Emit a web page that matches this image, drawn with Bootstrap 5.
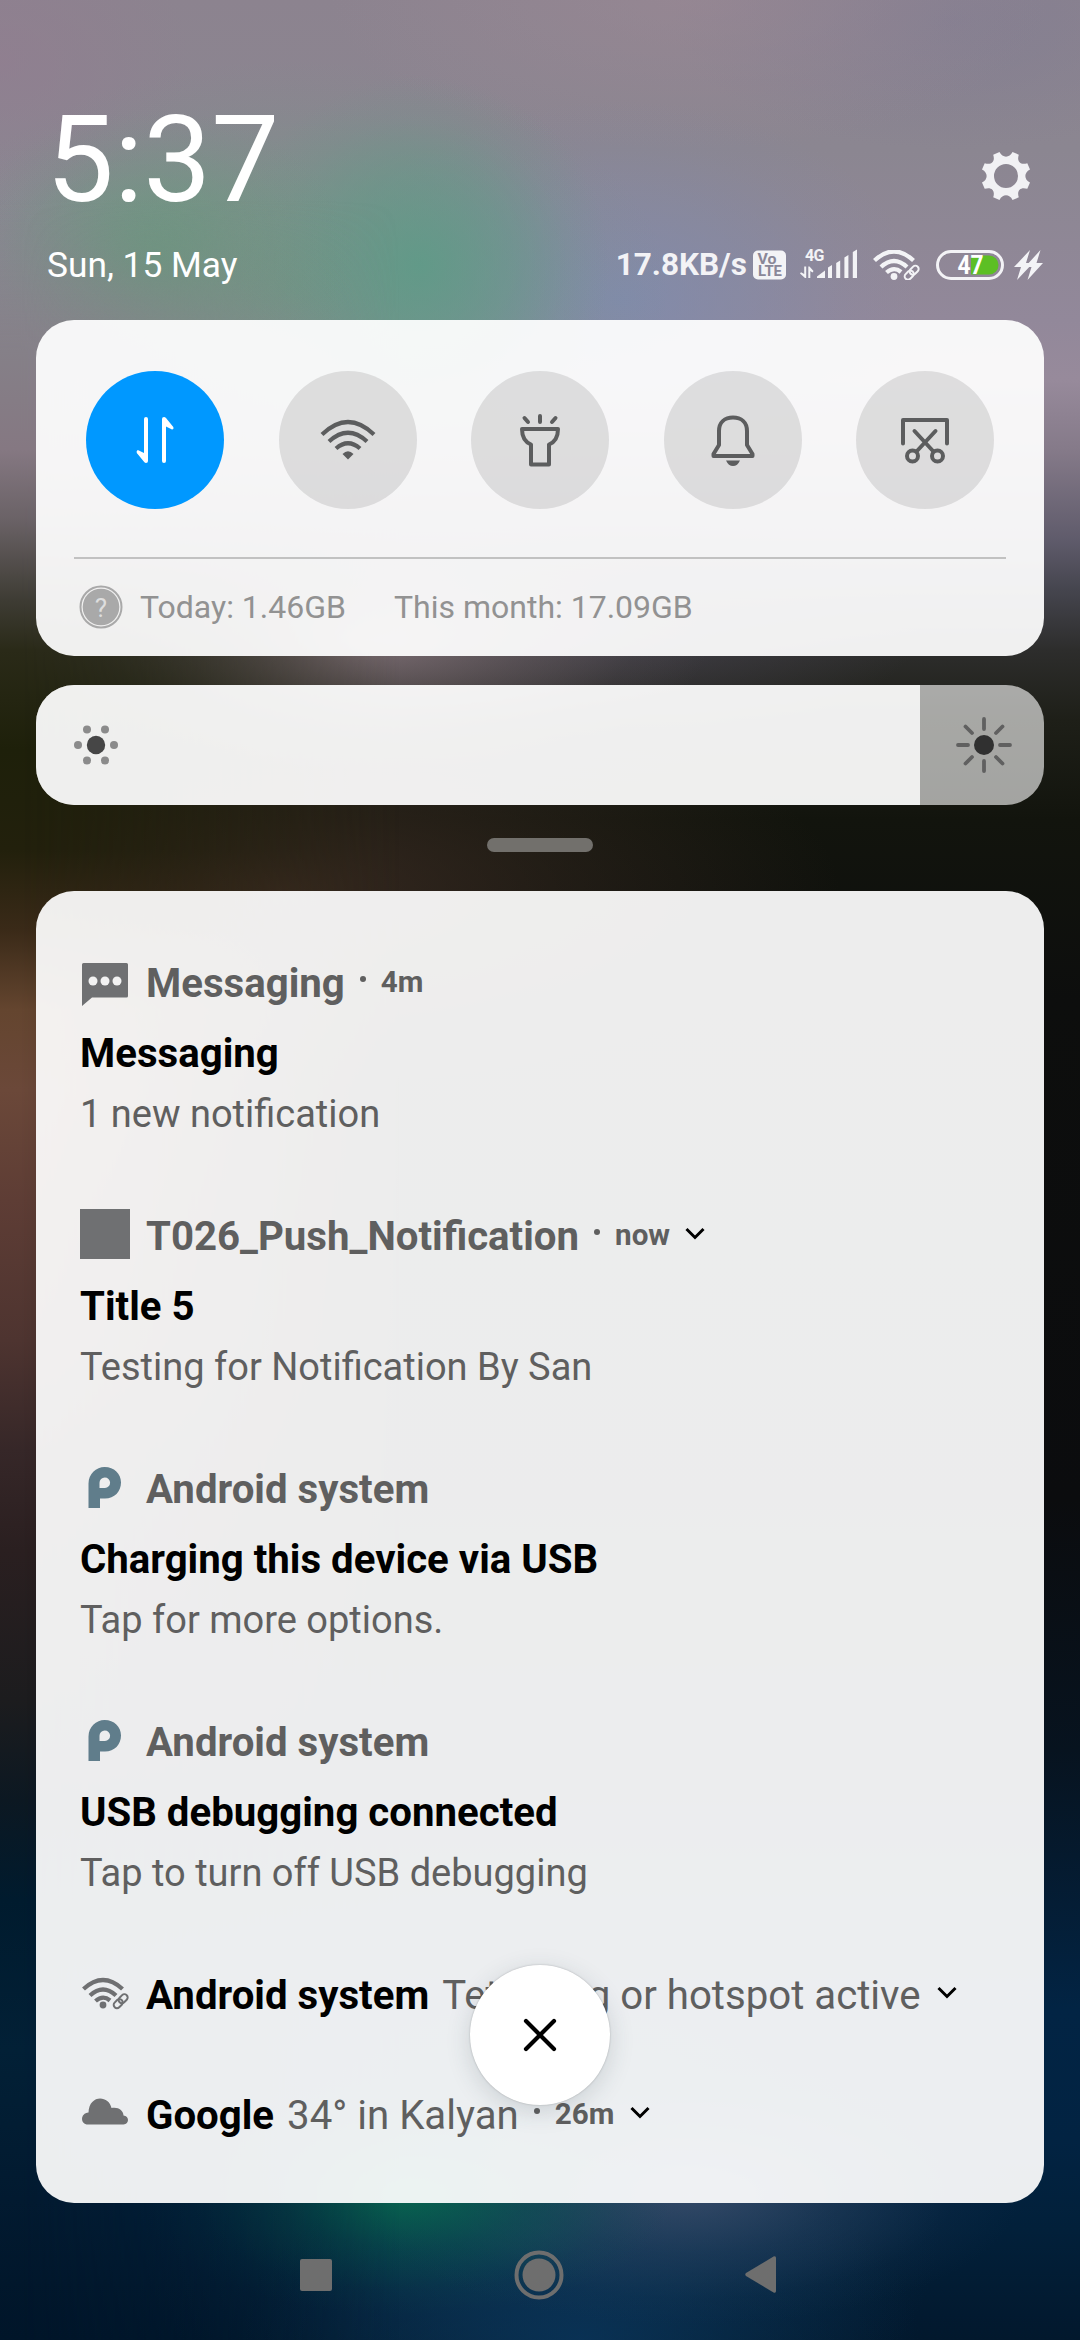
<!DOCTYPE html>
<html lang="en">
<head>
<meta charset="utf-8">
<meta name="viewport" content="width=device-width, initial-scale=1">
<title>Notification shade</title>
<link href="https://cdn.jsdelivr.net/npm/bootstrap@5.3.0/dist/css/bootstrap.min.css" rel="stylesheet">
<style>
  body { font-family: Roboto, "Noto Sans", sans-serif; background: #0c0d0d; }
  svg { display: block; flex: none; }
  .shade {
    width: 1080px; height: 2340px; overflow: hidden; position: relative; isolation: isolate;
    background:
      radial-gradient(200px 150px at 155px 260px, rgba(98,156,122,.75), rgba(98,156,122,.36) 45%, rgba(98,156,122,.1) 78%, rgba(98,156,122,0)),
      radial-gradient(190px 190px at 420px 265px, rgba(90,156,134,.78), rgba(90,156,134,.42) 48%, rgba(90,156,134,.12) 78%, rgba(90,156,134,0)),
      radial-gradient(380px 230px at 290px 290px, rgba(112,152,132,.8), rgba(112,152,132,.42) 48%, rgba(112,152,132,.1) 80%, rgba(112,152,132,0)),
      radial-gradient(300px 200px at 620px 300px, rgba(124,140,176,.75), rgba(124,140,176,.38) 45%, rgba(124,140,176,.1) 78%, rgba(124,140,176,0)),
      radial-gradient(190px 150px at 0px 60px, rgba(146,124,144,.6), rgba(146,124,144,0)),
      radial-gradient(360px 150px at 690px 0px, rgba(158,138,150,.5), rgba(158,138,150,0)),
      radial-gradient(280px 130px at 950px 20px, rgba(124,122,146,.5), rgba(124,122,146,0)),
      radial-gradient(340px 130px at 370px 640px, rgba(132,116,122,.9), rgba(132,116,122,.42) 45%, rgba(132,116,122,.1) 78%, rgba(132,116,122,0)),
      radial-gradient(300px 110px at 620px 630px, rgba(78,74,88,.6), rgba(78,74,88,0)),
      radial-gradient(560px 200px at 280px 890px, rgba(66,48,38,.75), rgba(66,48,38,.35) 50%, rgba(66,48,38,0)),
      radial-gradient(270px 120px at 405px 2195px, rgba(8,106,80,.9), rgba(8,98,80,.42) 45%, rgba(8,90,80,.1) 80%, rgba(8,90,80,0)),
      radial-gradient(330px 130px at 690px 2195px, rgba(56,76,106,.9), rgba(50,72,104,.42) 45%, rgba(40,64,98,.1) 80%, rgba(40,64,98,0)),
      radial-gradient(340px 190px at 580px 2340px, rgba(10,52,90,.8), rgba(10,52,90,.35) 50%, rgba(10,52,90,0)),
      radial-gradient(400px 260px at 540px 2230px, rgba(18,66,92,.6), rgba(18,66,92,.25) 50%, rgba(18,66,92,0)),
      linear-gradient(180deg, #8c838f 0, #8b8691 150px, #92889a 320px, #978a9b 380px, #857a89 450px, #5f5b6b 540px, #45454e 590px, #2d2d2c 650px, #1e1f18 720px, #12140d 820px, #0d0e0d 1000px, #0b0c0e 1500px, #07131f 1750px, #022444 2010px, #022342 2140px, #02203a 2230px, #02182d 2340px);
  }
  .shade::before {
    content: ""; position: absolute; z-index: -1; left: 0; top: 0; width: 400px; height: 100%;
    background: linear-gradient(180deg, rgba(133,128,136,0) 200px, #858088 350px, #857882 450px, #6a6266 520px, #3e3c34 600px, #2a2a18 650px, #1e200a 750px, #22200c 850px, #3a2a18 930px, #64452f 1010px, #6b4839 1090px, #5e3d35 1200px, #4e3430 1340px, #362728 1450px, #2a1f20 1550px, #1c1c1e 1700px, #0c1822 1800px, #001b2e 1900px, #022036 2050px, #021a30 2200px, #001529 2340px);
    -webkit-mask-image: linear-gradient(90deg, #000 20px, transparent 400px); mask-image: linear-gradient(90deg, #000 20px, transparent 400px);
  }
  .clock { font-size: 121px; line-height: 120px; }
  .top-bar { padding: 100px 37px 0 46px; height: 320px; }
  .gear { margin: 51px 12px 0 0; }
  .date { font-size: 35.3px; line-height: 40px; padding-top: 1px; padding-left: 1px; }
  .status { color: #f3f3f6; font-size: 31.5px; line-height: 40px; font-weight: 700; }
  .panel { --bs-card-border-width: 0; --bs-card-bg: rgba(255,255,255,.93); --bs-card-border-radius: 38px; margin: 0 36px; }
  .toggles { height: 336px; padding: 51px 38px 0; }
  .tiles { padding: 0 12px; }
  .tile { width: 138px; height: 138px; padding: 0; --bs-btn-border-width: 0; background: rgba(0,0,0,.1); color: #5c5d5e; }
  .tile-on, .tile-on:hover { background: #0098ff; color: #fff; }
  .rule { height: 2px; background: #c1c1c1; margin-top: 48px; }
  .usage { margin-top: 26px; padding-left: 5px; height: 44px; font-size: 32px; line-height: 44px; color: #929292; }
  .slider { --bs-progress-height: 120px; --bs-progress-bg: rgba(255,255,255,.61); --bs-progress-border-radius: 38px; --bs-progress-bar-bg: rgba(255,255,255,.82); margin: 29px 36px 0; position: relative; }
  .slider-icons { position: absolute; inset: 0; padding: 0 32px 0 37px; }
  .grip { width: 106px; height: 14px; border-radius: 7px; background: #72706c; margin: 33px auto 39px; }
  .notes { height: 1312px; padding: 65px 44px 0; gap: 70px; color: #5f5f5f; --bs-card-bg: rgba(255,255,255,.927); }
  .note-head { height: 50px; }
  .glyph { width: 50px; height: 50px; margin-right: 16px; color: #6f7072; }
  .app { font-size: 40.2px; line-height: 46px; padding-top: 5px; font-weight: 700; white-space: nowrap; }
  .plain { font-weight: 400; margin-left: 13px; }
  .pip { width: 6px; height: 6px; border-radius: 50%; background: #5f5f5f; margin: 0 15px 4px; }
  .ago { font-size: 29.6px; line-height: 34px; padding-top: 2px; font-weight: 700; }
  .note-title { font-size: 40.2px; line-height: 50px; margin-top: 23px; font-weight: 700; color: #000; }
  .note-text { font-size: 38px; line-height: 50px; margin-top: 10px; }
  .clear-all { position: absolute; left: 434px; top: 1074px; width: 140px; height: 140px; padding: 0; background: #fff; box-shadow: 0 6px 24px rgba(40,60,70,.17), 0 0 2px rgba(0,0,0,.25); --bs-btn-border-width: 0; }
  .nav-keys { height: 137px; padding: 6px 304px 0 300px; color: #6e6e6e; }
</style>
</head>
<body>
<svg width="0" height="0" class="position-absolute">
  <defs>
    <symbol id="wifi-link" viewBox="0 0 47 30">
      <g fill="none" stroke="currentColor">
        <path d="M1.500 10.500Q21 -7.500 40.500 10.500M8 17Q21 5 34 17M13.500 22.500Q21 16 28 22" stroke-width="4.300"/>
        <g stroke-width="2" transform="rotate(-45 38.500 22.500)"><rect x="30" y="19.500" width="10" height="6.500" rx="3.200"/><rect x="37" y="19.500" width="10" height="6.500" rx="3.200"/></g>
      </g>
      <circle cx="21" cy="26.500" r="3.400" fill="currentColor"/>
    </symbol>
    <symbol id="chev" viewBox="0 0 20 14"><path d="M1.500 2L10 10.500L18.500 2" fill="none" stroke="#000" stroke-width="3"/></symbol>
    <symbol id="p-mark" viewBox="0 0 50 50"><path fill="#607d8b" fill-rule="evenodd" d="M8.500 46V21.500A16 16.500 0 0 1 24.800 5C34 5 41 11.500 41 20.500C41 29.500 34.500 36.500 25 36.500H20V46ZM19.500 26H25A5.300 5.300 0 1 0 19.500 20.700Z"/></symbol>
  </defs>
</svg>

<main class="shade d-flex flex-column">
  <header class="top-bar text-white">
    <div class="d-flex justify-content-between align-items-start">
      <div class="clock">5:37</div>
      <svg class="gear" width="50" height="50" viewBox="-25 -25 50 50" fill="#f1f1f4">
        <path fill-rule="evenodd" d="M-6.500 -24L-12.800 -21.300C-10.500 -14.500 -14.500 -10.500 -21.300 -12.800L-24 -6.500C-17.800 -3.500 -17.800 3.500 -24 6.500L-21.300 12.800C-14.500 10.500 -10.500 14.500 -12.800 21.300L-6.500 24C-3.500 17.800 3.500 17.800 6.500 24L12.800 21.300C10.500 14.500 14.500 10.500 21.300 12.800L24 6.500C17.800 3.500 17.800 -3.500 24 -6.500L21.300 -12.800C14.500 -10.500 10.500 -14.500 12.800 -21.300L6.500 -24C3.500 -17.800 -3.500 -17.800 -6.500 -24ZM0 -12A12 12 0 1 1 0 12A12 12 0 1 1 0 -12Z"/>
      </svg>
    </div>
    <div class="d-flex justify-content-between align-items-center mt-4">
      <div class="date">Sun, 15 May</div>
      <div class="status d-flex align-items-center">
        <span>17.8KB/s</span>
        <svg width="33" height="30" viewBox="0 0 33 30" style="margin-left:6px">
          <rect y=".5" width="33" height="29" rx="5" fill="#f3f3f6"/>
          <g font-family="Roboto" font-weight="700" fill="#8a8798"><text x="4.500" y="13.500" font-size="14.500" textLength="19" lengthAdjust="spacingAndGlyphs">Vo</text><text x="5" y="26" font-size="14" textLength="24" lengthAdjust="spacingAndGlyphs">LTE</text></g>
        </svg>
        <svg width="57" height="34" viewBox="0 0 57 34" style="margin:-4px 0 0 14px" fill="#f3f3f6">
          <text x="5" y="14.500" font-family="Roboto" font-weight="700" font-size="16" textLength="19.500">4G</text>
          <path d="M4.200 20.500H6.200V32H5L0 27.500L1 26.200L4.200 28ZM8.300 32V20.500H9.500L13.500 25L12.500 26.500L10.300 25V32ZM17 32V30.500L25 24.500V32ZM28 21.500L32 19V32H28ZM36.200 17L40.200 14.500V32H36.200ZM44.400 11.500L48.400 9V32H44.400ZM52.800 6L57 3.500V32H52.800Z"/>
        </svg>
        <svg width="47" height="30" style="margin-left:16px"><use href="#wifi-link"/></svg>
        <svg width="68" height="30" viewBox="0 0 68 30" style="margin-left:16px">
          <rect x="1.500" y="1.500" width="65" height="27" rx="13.500" fill="none" stroke="#f3f3f6" stroke-width="3"/>
          <path d="M35 5.500H53A9.500 9.500 0 0 1 53 24.500H35Z" fill="#5cbf24"/>
          <text x="21.500" y="24" font-family="Roboto" font-weight="700" font-size="25" fill="#fff" textLength="26" lengthAdjust="spacingAndGlyphs">47</text>
        </svg>
        <svg width="29" height="30" viewBox="0 0 29 30" style="margin-left:10px" fill="#f3f3f6"><path d="M16 0L0 17H7L3 30L19 13H12ZM26.500 0L11 17H17.500L13.500 30L29 13H22.500Z"/></svg>
      </div>
    </div>
  </header>

  <section class="card panel toggles">
    <div class="tiles d-flex justify-content-between">
      <button class="btn rounded-circle tile tile-on d-flex align-items-center justify-content-center" aria-label="Mobile data">
        <svg width="38" height="48" viewBox="0 0 38 48" fill="currentColor"><path d="M8 3Q8 1 10 1T12 3V45Q12 47 10 47Q9 47 8.200 46L.8 37Q0 35 1.800 34L8 37ZM26 3Q26 1 28 1Q29 1 30 2L37.300 11Q38 13.500 36 13.500L30 10.500V45Q30 47 28 47T26 45Z"/></svg>
      </button>
      <button class="btn rounded-circle tile d-flex align-items-center justify-content-center" aria-label="Wi-Fi">
        <svg width="56" height="42" viewBox="0 0 56 42" fill="none" stroke="currentColor" stroke-width="4.200"><path d="M2 15.500Q28 -9.500 54 15.500M9 22.500Q28 5 47 22.500M16 29.500Q28 19 40 29.500"/><path d="M28 40.500L22.500 35Q28 29.500 33.500 35Z" fill="currentColor" stroke="none"/></svg>
      </button>
      <button class="btn rounded-circle tile d-flex align-items-center justify-content-center" aria-label="Torch">
        <svg width="44" height="54" viewBox="0 0 44 54" fill="none" stroke="currentColor" stroke-width="4" stroke-linecap="round" stroke-linejoin="round"><path d="M22 3V9M6.500 5L10 9M37.500 5L34 9M4 16H40C40 24 37 29 31 31.500V51.500H13V31.500C7 29 4 24 4 16Z"/></svg>
      </button>
      <button class="btn rounded-circle tile d-flex align-items-center justify-content-center" aria-label="Mute">
        <svg width="44" height="52" viewBox="0 0 44 52" fill="none" stroke="currentColor" stroke-width="4" stroke-linejoin="round"><path d="M8 31V17C8 8 14 3.500 22 3.500S36 8 36 17V31L41.500 40V42H2.500V40Z"/><path d="M15 46.500H29Q26.500 52 22 52T15 46.500Z" fill="currentColor" stroke="none"/></svg>
      </button>
      <button class="btn rounded-circle tile d-flex align-items-center justify-content-center" aria-label="Screenshot">
        <svg width="50" height="50" viewBox="0 0 50 50" fill="none" stroke="currentColor" stroke-width="4" stroke-linecap="round" stroke-linejoin="round"><path d="M3 28.500V5H47V28.500M14.500 16L33 36M35.500 16L17 36"/><circle cx="12.500" cy="41" r="5.500"/><circle cx="37.500" cy="41" r="5.500"/></svg>
      </button>
    </div>
    <div class="rule"></div>
    <div class="usage d-flex align-items-center">
      <svg width="44" height="44" viewBox="0 0 44 44"><circle cx="22" cy="22" r="20.500" fill="none" stroke="#a9a9a9" stroke-width="2"/><circle cx="22" cy="22" r="18.300" fill="#a9a9a9"/><text x="22" y="31.500" text-anchor="middle" font-family="Roboto" font-size="26" fill="#dedede">?</text></svg>
      <span style="margin-left:17px">Today: 1.46GB</span>
      <span class="ms-5">This month: 17.09GB</span>
    </div>
  </section>

  <div class="progress slider">
    <div class="progress-bar" style="width:87.7%"></div>
    <div class="slider-icons d-flex justify-content-between align-items-center">
      <svg width="46" height="46" viewBox="-23 -23 46 46" fill="#8b8b8b"><circle r="9.200" fill="#464646"/><circle cx="-18" r="4"/><circle cx="18" r="4"/><circle cx="-9" cy="-15.500" r="4"/><circle cx="9" cy="-15.500" r="4"/><circle cx="-9" cy="15.500" r="4"/><circle cx="9" cy="15.500" r="4"/></svg>
      <svg width="56" height="56" viewBox="-28 -28 56 56" stroke="#606060" stroke-width="3.800" stroke-linecap="round"><circle r="10" fill="#303030" stroke="none"/><path d="M0 -26V-16M0 26V16M-26 0H-16M26 0H16M-18.500 -18.500L-12 -12M18.500 18.500L12 12M-18.500 18.500L-12 12M18.500 -18.500L12 -12"/></svg>
    </div>
  </div>

  <div class="grip"></div>

  <section class="card panel notes">
    <article>
      <div class="note-head d-flex align-items-center">
        <svg class="glyph" viewBox="0 0 50 50"><path fill="currentColor" d="M3.500 7H46.500Q48 7 48 8.500V40Q48 41.500 46.500 41.500H12L2 50V8.500Q2 7 3.500 7Z"/><g fill="#f2f2f2"><circle cx="13" cy="25" r="4.500"/><circle cx="25" cy="25" r="4.500"/><circle cx="37" cy="25" r="4.500"/></g></svg>
        <span class="app">Messaging</span><span class="pip"></span><span class="ago">4m</span>
      </div>
      <div class="note-title">Messaging</div>
      <div class="note-text">1 new notification</div>
    </article>
    <article>
      <div class="note-head d-flex align-items-center">
        <svg class="glyph" viewBox="0 0 50 50"><rect width="50" height="50" fill="currentColor"/></svg>
        <span class="app">T026_Push_Notification</span><span class="pip"></span><span class="ago">now</span>
        <svg width="20" height="14" style="margin-left:15px"><use href="#chev"/></svg>
      </div>
      <div class="note-title">Title 5</div>
      <div class="note-text">Testing for Notification By San</div>
    </article>
    <article>
      <div class="note-head d-flex align-items-center">
        <svg class="glyph"><use href="#p-mark"/></svg><span class="app">Android system</span>
      </div>
      <div class="note-title">Charging this device via USB</div>
      <div class="note-text">Tap for more options.</div>
    </article>
    <article>
      <div class="note-head d-flex align-items-center">
        <svg class="glyph"><use href="#p-mark"/></svg><span class="app">Android system</span>
      </div>
      <div class="note-title">USB debugging connected</div>
      <div class="note-text">Tap to turn off USB debugging</div>
    </article>
    <article class="note-head d-flex align-items-center">
      <svg class="glyph" viewBox="0 0 50 50"><use href="#wifi-link" x="2" y="9" width="47" height="33"/></svg>
      <span class="app text-black">Android system</span><span class="app plain">Tethering or hotspot active</span>
      <svg width="20" height="14" style="margin-left:16px"><use href="#chev"/></svg>
    </article>
    <article class="note-head d-flex align-items-center">
      <svg class="glyph" viewBox="0 0 50 50"><path fill="currentColor" d="M8 36.500C-.5 36 .5 25 8.500 24.500C9 6 29 7 31.500 20C38 18.500 43.500 22.500 43.500 27.500C49.500 28 49.500 36 43.500 36.500Z"/></svg>
      <span class="app text-black">Google</span><span class="app plain">34° in Kalyan</span><span class="pip"></span><span class="ago">26m</span>
      <svg width="20" height="14" style="margin-left:16px"><use href="#chev"/></svg>
    </article>
    <button class="btn rounded-circle clear-all d-flex align-items-center justify-content-center" aria-label="Clear all">
      <svg width="36" height="36" viewBox="0 0 36 36" stroke="#000" stroke-width="4.200" stroke-linecap="round"><path d="M4 4L32 32M32 4L4 32"/></svg>
    </button>
  </section>

  <nav class="nav-keys d-flex justify-content-between align-items-center">
    <svg width="32" height="32"><rect width="32" height="32" rx="2" fill="currentColor"/></svg>
    <svg width="50" height="50" viewBox="-25 -25 50 50"><circle r="22.500" fill="none" stroke="currentColor" stroke-width="4"/><circle r="16.500" fill="currentColor"/></svg>
    <svg width="31" height="37" viewBox="0 0 31 37"><path d="M1 17L28.500 .5Q31 -.5 31 2V35Q31 37.500 28.500 36.500L1 20Q-.5 18.500 1 17Z" fill="currentColor"/></svg>
  </nav>
</main>
<script src="https://cdn.jsdelivr.net/npm/bootstrap@5.3.0/dist/js/bootstrap.bundle.min.js"></script>
</body>
</html>
